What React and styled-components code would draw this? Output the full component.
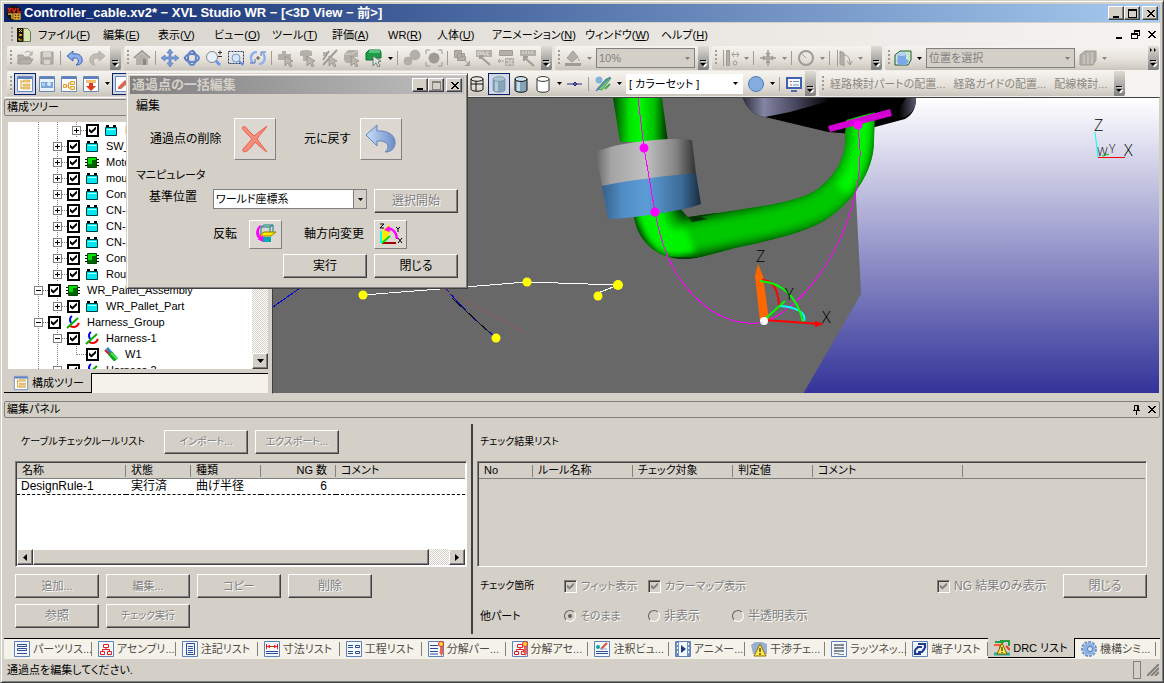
import React from 'react'
import styled, { createGlobalStyle, css } from 'styled-components'

const GlobalStyle = createGlobalStyle`
    * {
        box-sizing: border-box;
    }
    body {
        margin: 0;
        background: #d4d0c8;
        color: #000;
        font-family: "Liberation Sans", "Noto Sans CJK JP", sans-serif;
        font-size: 12px;
        line-height: 16px;
        font-feature-settings: "palt";
    }
    button, input, select {
        font: inherit;
        color: inherit;
        font-feature-settings: inherit;
        margin: 0;
        padding: 0;
    }
`

const raised = css`
    background: #d4d0c8;
    border: 1px solid;
    border-color: #fff #404040 #404040 #fff;
    box-shadow: inset -1px -1px #808080;
`

const Frame = styled.div`
    position: relative;
    min-height: 100vh;
    display: flex;
    flex-direction: column;
    padding: 3px 3px 1px 3px;
    border: 1px solid;
    border-color: #d4d0c8 #404040 #404040 #d4d0c8;
    box-shadow: inset 1px 1px #fff, inset -1px -1px #808080;
    overflow: hidden;
`

const TitleBar = styled.header`
    height: 18px;
    display: flex;
    align-items: center;
    padding: 0 2px;
    background: linear-gradient(90deg, #0a246a, #a6caf0);
    color: #fff;
    font-weight: bold;
`

const TitleText = styled.h1`
    flex: 1;
    margin: 0 0 0 2px;
    font-size: 13px;
    line-height: 18px;
    white-space: pre;
`

const WindowButton = styled.button`
    ${raised}
    width: 16px;
    height: 14px;
    display: flex;
    margin-left: ${(p) => (p.$gap ? 2 : 0)}px;
    svg {
        margin: auto;
    }
`

const MenuBar = styled.nav`
    height: 24px;
    display: flex;
    align-items: center;
    padding: 0 3px 0 4px;
    border-top: 1px solid #d4d0c8;
    background: linear-gradient(90deg, #d8d4cc, #f5f4f1);
`

const MenuItem = styled.button`
    width: ${(p) => p.$w}px;
    border: 0;
    background: none;
    text-align: left;
    white-space: nowrap;
    font-size: 11px;
`

const MenuEnd = styled.div`
    margin-left: auto;
    display: flex;
    gap: 5px;
`

const PlainButton = styled.button`
    border: 0;
    background: none;
    display: flex;
    align-items: center;
    justify-content: center;
    width: ${(p) => p.$w || 12}px;
`

const ToolRow = styled.div`
    height: ${(p) => p.$h || 25}px;
    display: flex;
    gap: 3px;
    padding: 0 0 1px 3px;
    background: linear-gradient(90deg, #d8d4cc, #f5f4f1);
`

const Bar = styled.div`
    display: flex;
    align-items: center;
    flex: 0 0 ${(p) => p.$w}px;
    background: linear-gradient(#f6f4f0, #e4e0d9 60%, #cbc6bc);
    border-radius: 2px;
    overflow: hidden;
`

const Grip = styled.span`
    flex: none;
    width: 7px;
    height: 16px;
    background: linear-gradient(#a09c94, #a09c94) 3px 0 / 2px 2px no-repeat,
        linear-gradient(#a09c94, #a09c94) 3px 4px / 2px 2px no-repeat,
        linear-gradient(#a09c94, #a09c94) 3px 8px / 2px 2px no-repeat,
        linear-gradient(#a09c94, #a09c94) 3px 12px / 2px 2px no-repeat;
`

const ToolButton = styled.button`
    flex: none;
    width: 22px;
    height: 22px;
    border: 1px solid ${(p) => (p.$on ? '#0a246a' : 'transparent')};
    background: ${(p) => (p.$on ? '#d4d8e4' : 'none')};
    display: flex;
    align-items: center;
    justify-content: center;
`

const CaretButton = styled.button`
    flex: none;
    width: 10px;
    height: 22px;
    border: 0;
    background: none;
    display: flex;
    align-items: center;
    justify-content: center;
    color: ${(p) => (p.$off ? '#8c8880' : '#000')};
`

const Divider = styled.span`
    flex: none;
    width: 1px;
    height: 14px;
    margin: 0 3px 0 2px;
    background: #a09c94;
`

const OverflowButton = styled.button`
    flex: none;
    align-self: stretch;
    width: 11px;
    margin-left: auto;
    border: 0;
    background: linear-gradient(#e0dcd4, #808080);
    display: flex;
    align-items: flex-end;
    justify-content: center;
    padding-bottom: 3px;
`

const TextTool = styled.button`
    border: 0;
    background: none;
    color: #8c8880;
    white-space: nowrap;
    padding: 0 4px;
    font-size: 11px;
`

const BarEnd = styled.div`
    margin-left: auto;
    display: flex;
    align-items: center;
    align-self: stretch;
`

const ComboBox = styled.span`
    position: relative;
    flex: none;
    width: ${(p) => p.$w}px;
    height: 20px;
    margin: ${(p) => (p.$tool ? '0 2px' : '0')};
    border: 1px solid ${(p) => (p.$flat ? '#fff' : '#808080')};
    background: ${(p) => (p.$off ? '#d4d0c8' : '#fff')};
    color: ${(p) => (p.$off ? '#808080' : '#000')};
    font-size: 11px;
    select {
        width: 100%;
        height: 100%;
        appearance: none;
        border: 0;
        background: none;
        padding-left: 2px;
        opacity: 1;
        outline: none;
    }
`

const ComboArrow = styled.span`
    position: absolute;
    top: 0;
    right: 0;
    width: 13px;
    height: 18px;
    display: flex;
    align-items: center;
    justify-content: center;
    pointer-events: none;
    border-left: ${(p) => (p.$boxed ? '1px solid #808080' : '0')};
    background: ${(p) => (p.$boxed ? '#d4d0c8' : 'none')};
`

const Main = styled.main`
    flex: 1 1 0;
    min-height: 200px;
    display: flex;
`

const SidePanel = styled.aside`
    flex: 0 0 268px;
    display: flex;
    flex-direction: column;
    padding-right: 4px;
    border-top: 1px solid #fff;
`

const Caption = styled.h2`
    margin: ${(p) => p.$m || '0'};
    height: 17px;
    padding: 0 2px;
    display: flex;
    align-items: center;
    border: 1px solid #808080;
    border-radius: 2px;
    font-size: 11px;
    font-weight: normal;
    line-height: 15px;
`

const CaptionEnd = styled.span`
    margin-left: auto;
    display: flex;
    gap: 2px;
`

const TreeArea = styled.div`
    flex: 1 1 0;
    min-height: 0;
    display: flex;
    margin: 6px 0 4px 4px;
    background: #fff;
    overflow: hidden;
`

const Tree = styled.ul`
    flex: 1;
    margin: 0;
    padding: 0 0 0 21px;
    list-style: none;
    overflow: hidden;
`

const TreeRow = styled.li`
    height: 16px;
    display: flex;
    align-items: center;
    white-space: nowrap;
    font-size: 11px;
`

const Guide = styled.span`
    flex: none;
    width: 19px;
    height: 16px;
    background: ${(p) =>
        p.$elbow
            ? 'repeating-linear-gradient(90deg, #808080 0 1px, transparent 1px 2px) 10px 8px / 9px 1px no-repeat, repeating-linear-gradient(#808080 0 1px, transparent 1px 2px) 9px 0 / 1px 9px no-repeat'
            : 'repeating-linear-gradient(#808080 0 1px, transparent 1px 2px) 9px 0 / 1px 16px no-repeat'};
`

// The dotted stem runs behind the box, above and below it
const Branch = styled.span`
    flex: none;
    display: flex;
    align-items: center;
    height: 16px;
    background:
        repeating-linear-gradient(#808080 0 1px, transparent 1px 2px) 9px 0 / 1px 16px no-repeat,
        repeating-linear-gradient(90deg, #808080 0 1px, transparent 1px 2px) 14px 8px / 5px 1px no-repeat;
`

const Expander = styled.button`
    flex: none;
    width: 9px;
    height: 9px;
    margin: 0 5px;
    border: 1px solid #808080;
    background:
        linear-gradient(#000, #000) center / 5px 1px no-repeat,
        ${(p) => (p.$open ? '' : 'linear-gradient(#000, #000) center / 1px 5px no-repeat,')}
        #fff;
`

const CheckInput = styled.input.attrs({ type: 'checkbox' })`
    appearance: none;
    flex: none;
    width: 13px;
    height: 13px;
    display: flex;
    background: ${(p) => (p.$sunken ? '#d4d0c8' : '#fff')};
    border: ${(p) => (p.$sunken ? '1px solid' : '2px solid #000')};
    ${(p) =>
        p.$sunken &&
        css`
            border-color: #808080 #fff #fff #808080;
            box-shadow: inset 1px 1px #404040;
        `}
    &:checked::before {
        content: '';
        width: 7px;
        height: 7px;
        margin: auto;
        background: ${(p) => (p.$sunken ? '#808080' : '#000')};
        clip-path: polygon(0 30%, 35% 62%, 100% 0, 100% 40%, 35% 100%, 0 70%);
    }
`

const TreeIcon = styled.svg`
    flex: none;
    width: 14px;
    height: 14px;
    margin: 0 7px 0 5px;
`

const dither = 'repeating-conic-gradient(#fff 0 25%, #d4d0c8 0 50%) 0 0 / 2px 2px'

const VScroll = styled.div`
    width: 16px;
    display: flex;
    flex-direction: column;
    justify-content: flex-end;
    background: ${dither};
`

const ScrollButton = styled.button`
    ${raised}
    flex: none;
    width: 16px;
    height: 16px;
    display: flex;
    align-items: center;
    justify-content: center;
`

const SideTabs = styled.div`
    height: 20px;
    display: flex;
    background: #f5f2ea;
    border-top: 1px solid #000;
    margin-bottom: 1px;
`

const SideTab = styled.button`
    width: 88px;
    margin: -1px 0 0;
    border: 0;
    border-right: 1px solid #000;
    border-bottom: 1px solid #000;
    background: #d4d0c8;
    display: flex;
    align-items: center;
    padding-left: 9px;
    gap: 3px;
    font-size: 11px;
    white-space: nowrap;
`

const View3D = styled.section`
    flex: 1;
    min-width: 0;
    border: 1px solid;
    border-color: #404040 #d4d0c8 #d4d0c8 #404040;
    background: linear-gradient(#fff, #333399);
    display: flex;
    overflow: hidden;
    svg {
        width: 100%;
        height: 100%;
    }
`

const EditPanel = styled.section`
    padding-top: 7px;
`

const EditBody = styled.div`
    display: flex;
    height: 220px;
`

const LeftPane = styled.div`
    flex: 0 0 467px;
    padding: 12px 4px 0 11px;
`

const RightPane = styled.div`
    flex: 1;
    min-width: 0;
    padding: 12px 13px 0 4px;
`

const Splitter = styled.div`
    width: 2px;
    margin: 6px 0 4px;
    background: #404040;
`

const Row = styled.div`
    display: flex;
    align-items: center;
    min-height: 24px;
    gap: 7px;
    margin-top: ${(p) => p.$top || 0}px;
`

const PaneLabel = styled.h3`
    width: ${(p) => p.$w}px;
    margin: 0 0 0 ${(p) => p.$left || 0}px;
    font-size: ${(p) => p.$size || 11}px;
    line-height: 16px;
    font-weight: normal;
    white-space: nowrap;
`

const PushButton = styled.button`
    ${raised}
    width: 84px;
    height: 24px;
    font-size: ${(p) => p.$size || 12}px;
    white-space: nowrap;
    &:disabled {
        color: #808080;
        text-shadow: 1px 1px #fff;
    }
`

const ListBox = styled.div`
    height: 106px;
    margin-top: 7px;
    display: flex;
    flex-direction: column;
    border: 1px solid;
    border-color: #808080 #fff #fff #808080;
    box-shadow: inset 1px 1px #404040;
    padding: 1px 1px 1px 1px;
    background: ${(p) => (p.$empty ? '#d4d0c8' : '#fff')};
`

const ListTable = styled.table`
    width: 100%;
    table-layout: fixed;
    border-collapse: collapse;
    th, td {
        height: 15px;
        padding: 0 5px;
        text-align: left;
        font-weight: normal;
        font-size: 11px;
        line-height: 14px;
        white-space: nowrap;
        overflow: hidden;
    }
    th {
        background: linear-gradient(#808080, #808080) right 2px / 1px 12px no-repeat, #d4d0c8;
        border-bottom: 1px solid #808080;
    }
    th:last-child {
        background: #d4d0c8;
    }
    td {
        height: 16px;
        border-top: 1px dashed #000;
        border-bottom: 1px dashed #000;
        font-size: 12px;
    }
    td:first-child {
        padding-left: 4px;
    }
    th.num, td.num {
        text-align: right;
        padding-right: 9px;
    }
`

const HScroll = styled.div`
    height: 16px;
    margin-top: auto;
    display: flex;
    background: ${dither};
`

const HThumb = styled.div`
    ${raised}
    flex: 1;
    margin-right: 20px;
`

const Options = styled.div`
    display: flex;
    align-items: center;
    flex: 1;
`

const OptionLabel = styled.label`
    display: flex;
    align-items: center;
    gap: 4px;
    width: ${(p) => p.$w || 84}px;
    margin-left: ${(p) => (p.$end ? 'auto' : '0')};
    color: #808080;
    text-shadow: 1px 1px #fff;
    font-size: ${(p) => p.$size || 11}px;
    white-space: nowrap;
`

const RadioInput = styled.input.attrs({ type: 'radio' })`
    appearance: none;
    width: 12px;
    height: 12px;
    display: flex;
    border: 1px solid;
    border-color: #606060 #fff #fff #606060;
    border-radius: 50%;
    &:checked::before {
        content: '';
        width: 4px;
        height: 4px;
        margin: auto;
        border-radius: 50%;
        background: #606060;
    }
`

const BottomTabs = styled.nav`
    display: flex;
    height: 21px;
    padding: 0 4px;
    background: #f5f2ea;
    border-top: 1px solid #000;
`

const BottomTab = styled.button`
    flex: ${(p) => p.$w} 1 0;
    min-width: 0;
    display: flex;
    align-items: center;
    gap: 3px;
    padding: 0 0 0 6px;
    border: 0;
    overflow: hidden;
    white-space: nowrap;
    font-size: 11px;
    color: ${(p) => (p.$on ? '#000' : '#504c48')};
    background: ${(p) =>
        p.$on ? '#d4d0c8' : 'linear-gradient(#808080, #808080) right 3px / 1px 14px no-repeat'};
    ${(p) =>
        p.$on &&
        css`
            margin: -1px 0 1px;
            border-right: 1px solid #000;
            border-bottom: 1px solid #000;
        `}
    svg {
        flex: none;
    }
`

const StatusBar = styled.footer`
    height: 22px;
    display: flex;
    align-items: center;
    padding: 0 1px 0 3px;
    font-size: 11px;
`

const StatusBox = styled.span`
    width: 8px;
    height: 18px;
    margin: 0 6px 0 auto;
    border: 1px solid #808080;
`

const Dialog = styled.section`
    position: absolute;
    top: 72px;
    left: 125px;
    width: 342px;
    padding: 2px 3px 3px 3px;
    background: #d4d0c8;
    border: 1px solid;
    border-color: #d4d0c8 #404040 #404040 #d4d0c8;
    box-shadow: inset 1px 1px #fff, inset -1px -1px #808080;
`

const DialogTitle = styled.header`
    height: 18px;
    display: flex;
    align-items: center;
    padding: 0 2px;
    background: linear-gradient(90deg, #808080, #c0c0c0);
    color: #d4d0c8;
    h2 {
        flex: 1;
        margin: 0;
        font-size: 13px;
        line-height: 18px;
    }
`

const DialogBody = styled.div`
    padding: 4px 6px 7px;
`

const DialogHeading = styled.h3`
    margin: ${(p) => p.$top || 0}px 0 0;
    font-size: ${(p) => p.$size || 12}px;
    line-height: 16px;
    font-weight: normal;
`

const DialogLine = styled.div`
    display: flex;
    align-items: ${(p) => p.$align || 'center'};
    justify-content: flex-end;
    height: ${(p) => p.$h}px;
    margin-top: ${(p) => p.$top || 0}px;
    gap: 7px;
    white-space: nowrap;
`

const LineLabel = styled.label`
    width: ${(p) => p.$w}px;
`

const ActionSlot = styled.span`
    width: ${(p) => p.$w || 84}px;
    display: flex;
`

const PictureButton = styled.button`
    width: ${(p) => p.$w}px;
    height: ${(p) => p.$h}px;
    background: #dcd8d1;
    border: 1px solid;
    border-color: #fff #808080 #808080 #fff;
    display: flex;
    align-items: center;
    justify-content: center;
`

function Caret() {
    return (
        <svg width="5" height="3" viewBox="0 0 5 3">
            <path d="M0 0h5L2.5 3z" fill="currentColor" />
        </svg>
    )
}

function Overflow({ more }) {
    return (
        <OverflowButton aria-label="ツール バー オプション">
            <svg width="7" height={more ? 20 : 7} viewBox={more ? '0 -13 7 20' : '0 0 7 7'}>
                {more && <path d="M0-12l2 2-2 2zM4-12l2 2-2 2z" fill="#000" />}
                <path d="M1 1h6M2 4h5L4.5 7z" fill="#fff" stroke="#fff" />
                <path d="M0 0h6v1H0zM0 3h6L3 6z" fill="#000" />
            </svg>
        </OverflowButton>
    )
}

const G = '#b4b0a8'
const D = '#a09c94'
const B = '#4a70b8'

// Mouse pointer that sits on the lower right of the pick tools
const pointer = <path d="M8 7l8 5-3 1 2 4-2 1-2-4-3 3z" fill="#bcb8b0" stroke="#8c8880" strokeWidth=".7" />

const icons = {
    open: (
        <g fill={G} stroke={D}>
            <path d="M2 15V6h5l1 2h6v3" />
            <path d="M2 15l3-5h12l-3 5z" />
            <path d="M9 4c2-3 5-2 6 1M16 2v4h-3" fill="none" />
        </g>
    ),
    save: (
        <g>
            <path d="M3 3h12v12H3z" fill={G} stroke={D} />
            <path d="M5 3h8v5H5zM6 11h6v4H6z" fill="#d8d4cc" />
        </g>
    ),
    undo: <path d="M1 7l6-5v3c6-1 10 2 9 8-1 2-3 3-6 3 4-3 3-8-3-7v3z" fill="#8cb0ec" stroke="#3f62b4" />,
    redo: <path d="M17 7l-6-5v3c-6-1-10 2-9 8 1 2 3 3 5 3-3-3-2-8 4-7v3z" fill="#c0bcb4" stroke="#b0aca4" />,
    home: (
        <g fill={G}>
            <path d="M3 9l6-5 6 5v7H3z" />
            <path d="M10 10h3v6h-3z" fill="#8c8880" />
            <path d="M1 9l8-7 8 7" fill="none" stroke={D} strokeWidth="2" />
        </g>
    ),
    move: (
        <path d="M9 0l3 4h-2v4h4V6l4 3-4 3v-2h-4v4h2l-3 4-3-4h2v-4H4v2L0 9l4-3v2h4V4H6z" fill="#7a9ad8" stroke={B} strokeWidth=".6" />
    ),
    rotate: (
        <g fill="none" stroke="#6484cc" strokeWidth="2">
            <ellipse cx="9" cy="9" rx="7" ry="4" />
            <ellipse cx="9" cy="9" rx="4" ry="7" />
            <path d="M1 8l2 3 3-2M9 1l3 2-2 3" strokeWidth="1" stroke={B} />
        </g>
    ),
    zoom: (
        <g>
            <path d="M10 11l5 5" stroke="#6c98f0" strokeWidth="3" />
            <circle cx="7" cy="8" r="5.5" fill="#e8f0fa" stroke="#888" />
            <path d="M13 3.5h4M15 1.500v4M13 7.500h4" stroke="#333" />
        </g>
    ),
    zoomRect: (
        <g>
            <path d="M1.5 2.5h15v12h-15z" fill="none" stroke="#203870" strokeDasharray="2 1" />
            <path d="M12 12l4 4" stroke="#5c88e0" strokeWidth="2" />
            <circle cx="9" cy="9" r="4" fill="#d4e8fa" stroke="#7898c8" />
        </g>
    ),
    refresh: (
        <g fill="none" stroke="#8cb0f0" strokeWidth="2.4">
            <path d="M8 3C2 3 0 10 4 14M10 15c6 0 7-7 4-11" />
            <path d="M1 14h5v-4M17 3h-5v4" stroke={B} strokeWidth="1" />
            <path d="M7 9h4M9 7v4" stroke="#555" strokeWidth="1" />
        </g>
    ),
    pickA: <g fill={G}><path d="M1 5h4V2h4v3h5v6H1z" />{pointer}</g>,
    pickB: <g fill={G}><ellipse cx="7" cy="3" rx="6" ry="2" /><path d="M1 3h12v4h-3v5H4V7H1z" />{pointer}</g>,
    pickC: <g fill={G}><path d="M2 3h4v4H2z" /><path d="M16 1L2 16M8 2l-6 9" stroke={D} fill="none" strokeWidth="2" />{pointer}</g>,
    pickD: <g fill={G}><path d="M5 1h10v7H8v6H3l-2-3V5z" /><path d="M1 5h8l6-4" stroke="#d8d4cc" fill="none" />{pointer}</g>,
    pickGreen: (
        <g>
            <path d="M4 1h11l1 3v5H8v2H1V4z" fill="#1e9c48" stroke="#0c6c30" />
            <path d="M4 1h11v3H4z" fill="#54c878" />
            <path d="M8 7l8 5-3 1 2 4-2 1-2-4-3 3z" fill="#d8e0dc" stroke="#586860" strokeWidth=".8" />
        </g>
    ),
    balls: (
        <g fill={G} stroke={D} strokeWidth=".5">
            <circle cx="5" cy="12" r="4" />
            <circle cx="12" cy="6" r="5" />
        </g>
    ),
    focus: (
        <g>
            <circle cx="9" cy="9" r="5.5" fill={D} />
            <path d="M1 5V1h4M13 1h4v4M17 13v4h-4M5 17H1v-4" fill="none" stroke="#999" />
        </g>
    ),
    layers: (
        <g fill={G} stroke={D}>
            <path d="M1.5 1.500h7v7h-7zM4.500 4.500h7v7h-7z" />
            <path d="M7.500 7.500h5v4M11 10l5 6M16.500 12v4.500H12" />
        </g>
    ),
    label: (
        <g>
            <path d="M1 1h16v7H1z" fill={G} />
            <path d="M3 3h3v3H3zM8 2v4h2V4M14 3h-2v3h2" fill="none" stroke="#e4e0d9" />
            <path d="M5 10V7h4M6 8l9 8" fill="none" stroke={D} strokeWidth="2" />
        </g>
    ),
    labelC: (
        <g>
            <path d="M2.500 1.500h13v5h-13z" fill={G} stroke={D} />
            <path d="M1 12h6M3 10l-2 2 2 2" fill="none" stroke={D} />
            <path d="M8 9h9v8H8z" fill={G} />
            <path d="M9 11h3v4H9M16 11h-2v4h2" fill="none" stroke="#e4e0d9" />
        </g>
    ),
    ruler: (
        <g>
            <path d="M1 1h16v6H1z" fill={G} />
            <path d="M4 2v3M7 2v3M10 2v3M13 2v3" stroke="#e4e0d9" />
            <path d="M5 12V8h4M6 9l9 8" fill="none" stroke={D} strokeWidth="2" />
        </g>
    ),
    paint: (
        <g fill={G}>
            <path d="M3 9l6-7 5 6-6 5z" stroke={D} />
            <path d="M14 8l2 4h-2z" />
            <path d="M1 14h16v3H1z" fill={D} />
        </g>
    ),
    align: (
        <g fill="none" stroke={D}>
            <path d="M2.500 1v16" />
            <path d="M5.500 1.500h3v15h-3z" fill={G} />
            <path d="M11 5.500h7M13 3l-2 2.500L13 8M16 3l2 2.500L16 8" />
            <circle cx="14" cy="14" r="2" />
        </g>
    ),
    cluster: (
        <g fill={G} stroke={D}>
            <path d="M7 7h4v4H7z" />
            <path d="M9 1v5M7 4l2 2 2-2M9 17v-5M7 14l2-2 2 2M1 9h5M4 7l2 2-2 2M17 9h-5M14 7l-2 2 2 2" fill="none" strokeWidth="1.500" />
        </g>
    ),
    clock: (
        <g fill="none" stroke={D} strokeWidth="2">
            <circle cx="9" cy="9" r="7" />
            <path d="M5 5l4 4" strokeWidth="1" />
        </g>
    ),
    slope: (
        <g fill="none" stroke={D}>
            <path d="M2.500 1v16M5 2l4 2v13l-4-2z" fill={G} />
            <path d="M9 6c4 0 6 3 6 9M12 12l3 4 2-4" />
        </g>
    ),
    place: (
        <g>
            <path d="M1 6l5-4h11v9l-3 5H1z" fill="#cfe4d0" stroke="#186020" />
            <path d="M4 5h8v5l3 2-3 4H5l-2-3z" fill="#7ca8e8" />
            <ellipse cx="8" cy="5" rx="4" ry="2" fill="#b4d0f4" />
        </g>
    ),
    placeOff: (
        <g>
            <path d="M1 6l5-4h11v9l-3 5H1z" fill={G} stroke={D} />
            <path d="M5 6v9M9 4v11M13 3v12" stroke="#d8d4cc" />
        </g>
    ),
    cylWire: <path d="M3 4c0-3 12-3 12 0v10c0 3-12 3-12 0zM3 4c0 3 12 3 12 0M3 9h12M8 6v10" fill="none" stroke="#111" />,
    cylBlue: (
        <g stroke="#6c8498" strokeWidth=".6">
            <path d="M3 4v11c0 3 12 3 12 0V4z" fill="#84a4b8" />
            <path d="M5 6h3v10H5z" fill="#b4ccd8" stroke="none" />
            <ellipse cx="9" cy="4" rx="6" ry="2.4" fill="#a8c4d4" />
        </g>
    ),
    cylEdge: (
        <g stroke="#111">
            <path d="M3 4v11c0 3 12 3 12 0V4z" fill="#84a4b8" />
            <path d="M5 7h3v9H5z" fill="#c4dce8" stroke="none" />
            <ellipse cx="9" cy="4" rx="6" ry="2.4" fill="#d4e4ec" />
        </g>
    ),
    cylWhite: (
        <g stroke="#333">
            <path d="M3 4v11c0 3 12 3 12 0V4z" fill="#fff" />
            <ellipse cx="9" cy="4" rx="6" ry="2.4" fill="#fff" />
        </g>
    ),
    axisPoint: <path d="M1 9h15M9 7l2 2-2 2-2-2z" fill="#8888d0" stroke="#26267c" />,
    percent: (
        <g>
            <path d="M3 14L12 4l5-1L8 15z" fill="#7cc878" stroke="#48a050" />
            <circle cx="5" cy="5" r="3.5" fill="#88b4dc" />
            <path d="M2 16L16 2" stroke="#507cc0" strokeWidth="1.500" />
            <path d="M11 14l5-5" stroke="#48a050" strokeWidth="2" />
        </g>
    ),
    sphere: <circle cx="9" cy="9" r="7.5" fill="#84acdc" stroke="#4e7cb8" />,
    monitor: (
        <g>
            <path d="M2 3h14v10H2z" fill="#f4f8ff" stroke="#4060b0" strokeWidth="2" />
            <path d="M5 6.500h2M5 10h2" stroke="#e06040" />
            <path d="M8 6.500h6M8 10h6" stroke="#7090c0" />
            <path d="M6 15h6v2H6z" fill="#5070b0" />
        </g>
    ),
    paneTree: (
        <g>
            <path d="M1.5 1.5h15v15h-15z" fill="#fff" stroke="#6c88b8" />
            <path d="M2 2h14v2H2z" fill="#5c80c0" />
            <path d="M5 5v9M5 7h2M5 13h2" stroke="#e0a030" fill="none" />
            <path d="M7 5h7v2H7zM7 9h7v2H7zM7 12h7v2H7z" fill="#f0d080" stroke="#c89030" strokeWidth=".5" />
        </g>
    ),
    paneView: (
        <g>
            <path d="M1.5 1.5h15v15h-15z" fill="#e8f0fa" stroke="#6c88b8" />
            <path d="M2 2h14v2H2z" fill="#5c80c0" />
            <path d="M3 7h12v6H3z" fill="#7ca4d4" />
            <circle cx="11" cy="9" r="2" fill="#dcecfc" />
            <path d="M4 8h3v3H4z" fill="#b4d0f0" />
        </g>
    ),
    paneFlow: (
        <g>
            <path d="M1.5 1.5h15v15h-15z" fill="#fff" stroke="#6c88b8" />
            <path d="M2 2h14v2H2z" fill="#5c80c0" />
            <path d="M3.500 9.500h3v3h-3zM10.500 6.500h4v3h-4zM10.500 11.500h4v3h-4zM7 11h1.500V8h2M8.500 11v2h2" fill="#fce8b8" stroke="#e0a030" />
        </g>
    ),
    paneDown: (
        <g>
            <path d="M1.5 1.5h15v15h-15z" fill="#fff" stroke="#6c88b8" />
            <path d="M2 2h14v2H2z" fill="#5c80c0" />
            <path d="M4 5h10v3H4z" fill="#f0c070" />
            <path d="M7 8h4v3h3l-5 5-5-5h3z" fill="#e03820" />
        </g>
    ),
    paneEdit: (
        <g>
            <path d="M1.5 1.5h15v15h-15z" fill="#fff" stroke="#6c88b8" />
            <path d="M4 12l7-7 3 3-7 6H4z" fill="#d86850" />
        </g>
    ),
}

function Icon({ name, size = 18 }) {
    return (
        <svg width={size} height={size} viewBox="0 0 18 18">
            {icons[name]}
        </svg>
    )
}

// A tool strip item is an icon name, 'v' for a live caret, 'V' for a greyed one, '|' for a divider
function Tools({ items, active = [] }) {
    return items.map((item, i) => {
        if (item === '|') return <Divider key={i} />
        if (item === 'v' || item === 'V') {
            return (
                <CaretButton key={i} $off={item === 'V'} aria-label="メニュー">
                    <Caret />
                </CaretButton>
            )
        }
        return (
            <ToolButton key={i} $on={active.includes(item)} aria-label={item}>
                <Icon name={item} />
            </ToolButton>
        )
    })
}

function Combo({ value, width, off, tool, flat, boxed, label, id }) {
    return (
        <ComboBox $w={width} $off={off} $tool={tool} $flat={flat}>
            <select id={id} aria-label={label} disabled={off}>
                <option>{value}</option>
            </select>
            <ComboArrow $boxed={boxed}>
                <Caret />
            </ComboArrow>
        </ComboBox>
    )
}

const glyphs = {
    min: <path d="M1 7h6v2H1z" />,
    max: <path d="M0 0h9v9H0zM1 2v6h7V2z" fillRule="evenodd" />,
    close: <path d="M0 1h2l2.5 2.5L7 1h2L5.5 4.5 9 8H7L4.5 5.5 2 8H0l3.5-3.5z" />,
    restore: <path d="M3 0h6v6H7v3H0V3h3zM4 2v1h3v2h1V2zM1 5v3h5V5z" fillRule="evenodd" />,
}

function Glyph({ name, color = '#000' }) {
    return (
        <svg width="9" height="9" viewBox="0 0 9 9" fill={color} shapeRendering="crispEdges">
            {glyphs[name]}
        </svg>
    )
}

function WindowButtons({ maxColor }) {
    return (
        <>
            <WindowButton aria-label="最小化"><Glyph name="min" /></WindowButton>
            <WindowButton aria-label="最大化"><Glyph name="max" color={maxColor} /></WindowButton>
            <WindowButton $gap aria-label="閉じる"><Glyph name="close" /></WindowButton>
        </>
    )
}

const menus = [
    ['ファイル', 'F', 65],
    ['編集', 'E', 55],
    ['表示', 'V', 56],
    ['ビュー', 'O', 58],
    ['ツール', 'T', 60],
    ['評価', 'A', 56],
    ['WR', 'R', 49],
    ['人体', 'U', 55],
    ['アニメーション', 'N', 93],
    ['ウィンドウ', 'W', 76],
    ['ヘルプ', 'H', 60],
]

const treeIcons = {
    part: (
        <g>
            <path d="M1.5 4.5h11v8h-11z" fill="#00e8f0" stroke="#003c40" />
            <path d="M2 2h3v2H2zM9 2h3v2H9z" fill="#000" />
            <path d="M3 6h8v1H3z" fill="#b0ffff" />
        </g>
    ),
    assembly: (
        <g>
            <path d="M0 4.5h14M0 7.5h14M0 10.5h14" stroke="#000" />
            <path d="M2.5 2.5h9v10h-9z" fill="#00e000" stroke="#004800" />
            <path d="M3 12V9h4V5h4v7z" fill="#006400" />
        </g>
    ),
    harness: (
        <g fill="none" strokeWidth="2">
            <path d="M6 1C3 3 4 6 5 8" stroke="#0000f0" />
            <path d="M4 11c4 2 7 1 9-3" stroke="#f00000" />
            <path d="M1 13L12 3" stroke="#00b000" />
        </g>
    ),
    wire: (
        <g strokeWidth="3">
            <path d="M3 1l4 5" stroke="#3080d0" />
            <path d="M1 3l5 5" stroke="#d02020" strokeWidth="2" />
            <path d="M6 6l6 7" stroke="#10a020" strokeWidth="5" />
            <path d="M7 6l6 6" stroke="#40e850" strokeWidth="2" />
        </g>
    ),
}

const treeRows = [
    { depth: 2, icon: 'part', text: 'Lever' },
    { depth: 1, icon: 'part', text: 'SW_Box' },
    { depth: 1, icon: 'assembly', text: 'Motor' },
    { depth: 1, icon: 'part', text: 'mount' },
    { depth: 1, icon: 'part', text: 'Connector' },
    { depth: 1, icon: 'part', text: 'CN-1' },
    { depth: 1, icon: 'part', text: 'CN-2' },
    { depth: 1, icon: 'part', text: 'CN-3' },
    { depth: 1, icon: 'assembly', text: 'Controller' },
    { depth: 1, icon: 'part', text: 'Route' },
    { depth: 0, icon: 'assembly', text: 'WR_Pallet_Assembly', open: true },
    { depth: 1, icon: 'part', text: 'WR_Pallet_Part' },
    { depth: 0, icon: 'harness', text: 'Harness_Group', open: true },
    { depth: 1, icon: 'harness', text: 'Harness-1', open: true },
    { depth: 2, icon: 'wire', text: 'W1', leaf: true },
    { depth: 1, icon: 'harness', text: 'Harness-2', open: true },
]

function StructureTree() {
    return (
        <Tree>
            {treeRows.map((row, i) => (
                <TreeRow key={i}>
                    {Array.from({ length: row.depth }, (_, d) => (
                        <Guide key={d} />
                    ))}
                    {row.leaf ? (
                        <Guide $elbow />
                    ) : (
                        <Branch>
                            <Expander $open={row.open} aria-label="展開" />
                        </Branch>
                    )}
                    <CheckInput defaultChecked aria-label={row.text} />
                    <TreeIcon viewBox="0 0 14 14">{treeIcons[row.icon]}</TreeIcon>
                    {row.text}
                </TreeRow>
            ))}
        </Tree>
    )
}

const pipe =
    'M633 212C636 246 664 262 690 259C707 257 725 250 745 246C785 237 810 231 830 217C852 201 874 172 874 142L875 112L846 120L845 134C848 158 832 181 813 192C790 204 750 208 688 217L678 206L655 200z'
const pipeAxis = 'M654 195C658 236 676 240 700 236C750 225 790 220 820 205C848 188 861 160 860 112'

function Scene() {
    return (
        <svg viewBox="273 98 886 295" preserveAspectRatio="xMidYMid slice" role="img" aria-label="3D View">
            <defs>
                <linearGradient id="topPipe">
                    <stop offset="0" stopColor="#004c00" />
                    <stop offset=".3" stopColor="#00e400" />
                    <stop offset=".5" stopColor="#00f800" />
                    <stop offset=".75" stopColor="#00c000" />
                    <stop offset="1" stopColor="#002c00" />
                </linearGradient>
                <linearGradient id="collar">
                    <stop offset="0" stopColor="#686868" />
                    <stop offset=".15" stopColor="#a4a4a4" />
                    <stop offset=".5" stopColor="#c0c0c0" />
                    <stop offset=".8" stopColor="#848484" />
                    <stop offset="1" stopColor="#303030" />
                </linearGradient>
                <linearGradient id="band">
                    <stop offset="0" stopColor="#34608a" />
                    <stop offset=".2" stopColor="#508cc4" />
                    <stop offset=".45" stopColor="#5c9cd6" />
                    <stop offset=".8" stopColor="#3c6c98" />
                    <stop offset="1" stopColor="#182c40" />
                </linearGradient>
                <linearGradient id="cover">
                    <stop offset="0" stopColor="#303040" />
                    <stop offset=".12" stopColor="#8484a4" />
                    <stop offset=".3" stopColor="#484860" />
                    <stop offset=".5" stopColor="#000" />
                    <stop offset=".9" stopColor="#000" />
                    <stop offset="1" stopColor="#5c5c74" />
                </linearGradient>
                <clipPath id="pipeClip">
                    <path d={pipe} />
                </clipPath>
                <filter id="soft" x="-10%" y="-10%" width="120%" height="120%">
                    <feGaussianBlur stdDeviation="3" />
                </filter>
            </defs>
            <path d="M272 98H851L861 294L803 394H272z" fill="#686868" />
            <path d="M743 98C746 106 752 115 765 117L828 132L853 134L875 127L905 119C914 114 916 106 916 98z" fill="#000" />
            <path d="M743 98C746 106 752 115 765 117L790 112L840 98zM893 119L905 117C914 112 916 106 916 98H906z" fill="url(#cover)" />
            <g clipPath="url(#pipeClip)">
                <path d={pipe} fill="#004400" />
                <g filter="url(#soft)" fill="none">
                    <path d={pipeAxis} stroke="#009c00" strokeWidth="36" />
                    <path d={pipeAxis} stroke="#00c800" strokeWidth="22" />
                    <path d="M648 208C656 238 668 250 690 240" stroke="#00f400" strokeWidth="26" />
                    <path d="M863 112C863 160 854 175 842 190" stroke="#00f400" strokeWidth="16" />
                </g>
            </g>
            <path d="M688 217l30-4-18 4 8 2-16 3z" fill="#003400" />
            <path d="M613 98H662L668 142H620z" fill="url(#topPipe)" />
            <path d="M596 153C606 144 668 136 692 140L696 174L602 186z" fill="url(#collar)" />
            <path d="M602 186C630 180 664 176 696 173L701 204C690 209 640 218 608 219z" fill="url(#band)" />
            <path d="M828 126L890 109L892 116L830 132z" fill="#d400d4" />
            <path
                d="M638 98L644 148L655 212C662 250 675 285 712 311C730 322 750 326 768 321C820 296 862 215 860 150L858 125"
                fill="none"
                stroke="#f0f"
                shapeRendering="crispEdges"
            />
            <g fill="#f0f">
                <circle cx="644" cy="148" r="4.5" />
                <circle cx="655" cy="212" r="4.5" />
                <circle cx="858" cy="125" r="4.5" />
            </g>
            <g fill="none" shapeRendering="crispEdges">
                <path d="M273 307L300 288M445 288L470 315L496 338" stroke="#0000e0" />
                <path d="M452 298L490 333" stroke="#101018" />
                <path d="M440 288L527 334" stroke="#845c5c" />
                <path d="M363 295L440 289L527 282L618 285L598 293" stroke="#fff" />
            </g>
            <g fill="#ff0">
                <circle cx="363" cy="295" r="4.5" />
                <circle cx="527" cy="282" r="4.5" />
                <circle cx="618" cy="285" r="5" />
                <circle cx="598" cy="296" r="4.5" />
                <circle cx="496" cy="338" r="4.5" />
            </g>
            <path d="M760 321L755 276L758 264L763 276L769 320z" fill="#ff6600" />
            <g fill="none" strokeWidth="2">
                <path d="M762 280C773 280 778 290 779 305" stroke="#f00" />
                <path d="M780 306C795 307 807 312 804 321" stroke="#0ff" />
                <path d="M760 281C780 282 797 295 803 322" stroke="#0f0" />
                <path d="M764 320L785 301" stroke="#0f0" />
                <path d="M765 320L820 324" stroke="#f00" />
            </g>
            <path d="M815 321L824 324L815 327z" fill="#f00" />
            <circle cx="764" cy="321" r="4" fill="#fff" />
            <g fontSize="16" fontFamily="Open Sans, sans-serif" fontWeight="300" fill="#000">
                <text x="756" y="262">Z</text>
                <text x="785" y="300">Y</text>
                <text x="822" y="323">X</text>
                <text x="1094" y="131">Z</text>
                <text x="1124" y="156">X</text>
            </g>
            <g fontSize="12" fontFamily="Open Sans, sans-serif" fontWeight="300" fill="#000">
                <text x="1097" y="156">W</text>
                <text x="1109" y="153">Y</text>
            </g>
            <path d="M1095 132L1098 157" stroke="#0ff" />
            <path d="M1098 157.5H1125" stroke="#f00" />
            <path d="M1102 156L1109 154" stroke="#0c0" />
        </svg>
    )
}

const box = <path d="M.5.5h15v15H.5z" fill="#f4f8ff" stroke="#6080b8" />
const redTree = <path d="M5.5 3.5h5v3h-5zM2.5 10.5h4v3h-4zM9.5 10.5h4v3h-4zM8 7v2M4.5 10V8.5h7V10" fill="none" stroke="#e02020" />
const redPin = (
    <g>
        <path d="M12 4h3v7h1l-2.5 4-2.5-4h1z" fill="#f06050" />
        <circle cx="13" cy="3" r="2.5" fill="#ffd840" stroke="#f03020" />
    </g>
)

const tabIcons = {
    parts: <>{box}<path d="M3.5 3.5h9v2h-9zM3.5 7.5h9v2h-9zM3 12.5h10" fill="none" stroke="#304c90" /></>,
    asm: <>{box}{redTree}</>,
    note: <>{box}<path d="M4.5 2.5h8v11h-8zM6 5.5h5M6 7.5h5M6 9.5h5M6 11.5h5" fill="none" stroke="#304c90" /></>,
    dim: <>{box}<path d="M2.5 3v5M13.5 3v5M3 5.5h10M6 4L4 5.5 6 7M10 4l2 1.5L10 7" fill="none" stroke="#e02020" /><path d="M2 10.5h12M2 12.5h12" stroke="#304c90" /></>,
    process: <>{box}<path d="M2 4.5h5M2 6.5h5M2 10.5h5M2 12.5h5M9.5 4.5h4v2h-4zM9.5 10.5h4v2h-4z" fill="none" stroke="#304c90" /></>,
    expPart: <>{box}<path d="M2 4.5h8M2 7.5h8M2 10.5h8M2 13h8" stroke="#304c90" />{redPin}</>,
    expAsm: <>{box}{redTree}{redPin}</>,
    view: <>{box}<path d="M2 10.5h12M2 12.5h12" stroke="#304c90" /><path d="M7 8l6-6" stroke="#e05030" strokeWidth="2" /><path d="M6 8h7" stroke="#90a8c8" /><circle cx="4" cy="6" r="2" fill="#00a8a8" /></>,
    anim: <>{box}<path d="M1 1h3v14H1zM12 1h3v14h-3z" fill="#7090c0" /><path d="M2.5 2v12M13.5 2v12" stroke="#fff" strokeDasharray="2 2" /><path d="M6 4l5 4-5 4z" fill="#203878" /></>,
    warn: <><path d="M0 4l4-3h7l5 2v10H2z" fill="#98b0d0" /><path d="M9 3l6 12H3z" fill="#ffe850" stroke="#907000" /><path d="M9 7v4M9 12v2" stroke="#000" /></>,
    rats: <>{box}<path d="M3 4c3-2 7 2 10 0M3 7c3-2 7 2 10 0M3 10c3-2 7 2 10 0M3 13c3-2 7 2 10 0M3 4c3 2 7-2 10 0M3 7c3 2 7-2 10 0M3 10c3 2 7-2 10 0" fill="none" stroke="#606870" /></>,
    terminal: <>{box}<path d="M3 9l3-3h4M13 7l-3 4H6M6 3h7v4M3 9v4h6" fill="none" stroke="#203c90" strokeWidth="2.2" /></>,
    drc: <><path d="M1 2h9M6 1h9v5" fill="none" stroke="#20a040" strokeWidth="2" /><path d="M0 5h6v4" fill="none" stroke="#f06030" strokeWidth="2" /><path d="M0 14h16" stroke="#20b0a0" strokeWidth="3" /><path d="M12 6l4 4" stroke="#e04020" strokeWidth="2" /><path d="M8 3l5 11H3z" fill="#ffe850" stroke="#806000" /><path d="M8 7v4M8 12v1" stroke="#000" /></>,
    gear: <><circle cx="8" cy="8" r="7" fill="none" stroke="#6c94cc" strokeDasharray="3 1" strokeWidth="2" /><circle cx="8" cy="8" r="6" fill="#8cb0e0" /><circle cx="9" cy="8" r="2.5" fill="#dce8f8" stroke="#5078b0" /></>,
}

const tabs = [
    ['parts', 'パーツリス...', 84],
    ['asm', 'アセンブリ...', 84],
    ['note', '注記リスト', 82],
    ['dim', '寸法リスト', 82],
    ['process', '工程リスト', 82],
    ['expPart', '分解パー...', 84],
    ['expAsm', '分解アセ...', 83],
    ['view', '注釈ビュ...', 80],
    ['anim', 'アニメー...', 76],
    ['warn', '干渉チェ...', 80],
    ['rats', 'ラッツネッ...', 81],
    ['terminal', '端子リスト', 82],
    ['drc', 'DRC リスト', 86],
    ['gear', '機構シミ...', 81],
]

function PassPointDialog() {
    return (
        <Dialog role="dialog" aria-label="通過点の一括編集">
            <DialogTitle>
                <h2>通過点の一括編集</h2>
                <WindowButtons maxColor="#808080" />
            </DialogTitle>
            <DialogBody>
                <DialogHeading>編集</DialogHeading>
                <DialogLine $h={42} $top={4}>
                    <LineLabel $w={77} htmlFor="deletePoint">通過点の削除</LineLabel>
                    <ActionSlot $w={63}>
                        <PictureButton id="deletePoint" $w={42} $h={42}>
                            <svg width="28" height="28" viewBox="0 0 28 28">
                                <path d="M1 3c2-3 4-1 6 2l6 6L26 1c-2 4-7 8-10 13l10 13c-5-3-9-7-12-10-2 3-5 7-8 9-3 2-6 0-3-3l8-9C8 11 4 7 1 3z" fill="#f88c7c" stroke="#e86050" />
                            </svg>
                        </PictureButton>
                    </ActionSlot>
                    <LineLabel $w={49} htmlFor="undoPoint">元に戻す</LineLabel>
                    <ActionSlot $w={98}>
                        <PictureButton id="undoPoint" $w={42} $h={42}>
                            <svg width="32" height="30" viewBox="0 0 32 30">
                                <defs>
                                    <linearGradient id="undoFill">
                                        <stop offset="0" stopColor="#c8e0f8" />
                                        <stop offset="1" stopColor="#6c8cc8" />
                                    </linearGradient>
                                </defs>
                                <path d="M1 11L12 1v6c13-1 19 6 18 13-1 5-4 8-10 8 5-4 4-12-8-11v5z" fill="url(#undoFill)" stroke="#6484b8" />
                            </svg>
                        </PictureButton>
                    </ActionSlot>
                </DialogLine>
                <DialogHeading $top={7} $size={11}>マニピュレータ</DialogHeading>
                <DialogLine $h={24} $top={6} $align="flex-start">
                    <LineLabel $w={57} htmlFor="basePosition">基準位置</LineLabel>
                    <Combo id="basePosition" value="ワールド座標系" width={154} boxed />
                    <PushButton disabled>選択開始</PushButton>
                </DialogLine>
                <DialogLine $h={30} $top={6}>
                    <LineLabel $w={29} htmlFor="flip">反転</LineLabel>
                    <ActionSlot $w={48}>
                        <PictureButton id="flip" $w={33} $h={29}>
                            <svg width="22" height="20" viewBox="0 0 22 20">
                                <path d="M6 3l3-2h9v8l-3 2H6zM6 3h9v8M15 3l3-2" fill="none" stroke="#008080" />
                                <path d="M4 12l5-4h12l-5 4z" fill="#ffe800" stroke="#908000" />
                                <path d="M8 13h8v5H8z" fill="#00a8b0" />
                                <path d="M5 1C0 5 0 12 4 15H2l6 3V11l-2 2C3 9 4 5 6 2z" fill="#f0f" />
                            </svg>
                        </PictureButton>
                    </ActionSlot>
                    <LineLabel $w={63} htmlFor="axisDir">軸方向変更</LineLabel>
                    <ActionSlot>
                        <PictureButton id="axisDir" $w={33} $h={29}>
                            <svg width="24" height="22" viewBox="0 0 24 22">
                                <path d="M2 21V9l9-8v8L5 20z" fill="#ffe800" />
                                <path d="M2 8v12" stroke="#0ff" strokeWidth="2" />
                                <path d="M3 20h14" stroke="#a00000" strokeWidth="2" />
                                <path d="M3 20l8-7" stroke="#0d0" strokeWidth="2" />
                                <path d="M9 5c5 1 9 5 9 11" fill="none" stroke="#f0f" strokeWidth="2.5" />
                                <path d="M5 7l5-4 1 6z" fill="#f0f" />
                                <path d="M1 1h4L1 5h4M17 4l2 2 2-2M19 6v3M19 15l4 5M23 15l-4 5" fill="none" stroke="#000" />
                            </svg>
                        </PictureButton>
                    </ActionSlot>
                </DialogLine>
                <DialogLine $h={24} $top={5}>
                    <PushButton>実行</PushButton>
                    <PushButton>閉じる</PushButton>
                </DialogLine>
            </DialogBody>
        </Dialog>
    )
}

function RuleList() {
    return (
        <LeftPane>
            <Row>
                <PaneLabel $w={136} $left={6} $size={10}>ケーブルチェックルールリスト</PaneLabel>
                <PushButton disabled $size={10}>インポート...</PushButton>
                <PushButton disabled $size={10}>エクスポート...</PushButton>
            </Row>
            <ListBox>
                <ListTable>
                    <colgroup>
                        <col width="109" />
                        <col width="65" />
                        <col width="70" />
                        <col width="75" />
                        <col />
                    </colgroup>
                    <thead>
                        <tr>
                            <th>名称</th>
                            <th>状態</th>
                            <th>種類</th>
                            <th className="num">NG 数</th>
                            <th>コメント</th>
                        </tr>
                    </thead>
                    <tbody>
                        <tr>
                            <td>DesignRule-1</td>
                            <td>実行済</td>
                            <td>曲げ半径</td>
                            <td className="num">6</td>
                            <td />
                        </tr>
                    </tbody>
                </ListTable>
                <HScroll>
                    <ScrollButton aria-label="左へ">
                        <svg width="4" height="7" viewBox="0 0 4 7"><path d="M4 0v7L0 3.5z" /></svg>
                    </ScrollButton>
                    <HThumb />
                    <ScrollButton aria-label="右へ">
                        <svg width="4" height="7" viewBox="0 0 4 7"><path d="M0 0v7l4-3.5z" /></svg>
                    </ScrollButton>
                </HScroll>
            </ListBox>
            <Row $top={7}>
                <PushButton disabled $size={11}>追加...</PushButton>
                <PushButton disabled $size={11}>編集...</PushButton>
                <PushButton disabled $size={11}>コピー</PushButton>
                <PushButton disabled>削除</PushButton>
            </Row>
            <Row $top={6}>
                <PushButton disabled>参照</PushButton>
                <PushButton disabled $size={10}>チェック実行</PushButton>
            </Row>
        </LeftPane>
    )
}

function ResultList() {
    return (
        <RightPane>
            <Row>
                <PaneLabel $left={3} $size={10}>チェック結果リスト</PaneLabel>
            </Row>
            <ListBox $empty>
                <ListTable>
                    <colgroup>
                        <col width="54" />
                        <col width="100" />
                        <col width="100" />
                        <col width="80" />
                        <col width="150" />
                        <col />
                    </colgroup>
                    <thead>
                        <tr>
                            <th>No</th>
                            <th>ルール名称</th>
                            <th>チェック対象</th>
                            <th>判定値</th>
                            <th>コメント</th>
                            <th />
                        </tr>
                    </thead>
                </ListTable>
            </ListBox>
            <Row $top={7}>
                <PaneLabel $w={77} $left={3} $size={10}>チェック箇所</PaneLabel>
                <Options>
                    <OptionLabel>
                        <CheckInput $sunken defaultChecked disabled />
                        フィット表示
                    </OptionLabel>
                    <OptionLabel $w={120}>
                        <CheckInput $sunken defaultChecked disabled />
                        カラーマップ表示
                    </OptionLabel>
                    <OptionLabel $end $w={119} $size={12}>
                        <CheckInput $sunken defaultChecked disabled />
                        NG 結果のみ表示
                    </OptionLabel>
                </Options>
                <PushButton disabled>閉じる</PushButton>
            </Row>
            <Row $top={6}>
                <PaneLabel $w={77} $left={3}>他パート</PaneLabel>
                <Options>
                    <OptionLabel>
                        <RadioInput name="others" defaultChecked disabled />
                        そのまま
                    </OptionLabel>
                    <OptionLabel $size={12}>
                        <RadioInput name="others" disabled />
                        非表示
                    </OptionLabel>
                    <OptionLabel $size={12}>
                        <RadioInput name="others" disabled />
                        半透明表示
                    </OptionLabel>
                </Options>
            </Row>
        </RightPane>
    )
}

function App() {
    return (
        <>
            <GlobalStyle />
            <Frame>
                <TitleBar>
                    <svg width="16" height="16" viewBox="0 0 16 16">
                        <circle cx="8" cy="8" r="7.5" fill="#181410" />
                        <path d="M2 3l3 4M5 3L2 7M6 3l2 4 2-4M12 3v4h3" fill="none" stroke="#f02010" strokeWidth="1.5" />
                        <path d="M2 9h4v5M8 9h6v5H8zM8 11.5h6M11 9v6" fill="none" stroke="#e0a830" strokeWidth="1.5" />
                    </svg>
                    <TitleText>Controller_cable.xv2* − XVL Studio WR − [&lt;3D View − 前&gt;]</TitleText>
                    <WindowButtons />
                </TitleBar>
                <MenuBar>
                    <Grip />
                    <svg width="23" height="18" viewBox="0 0 23 18">
                        <path d="M2 2h7v14H2z" fill="#181410" />
                        <path d="M4 3l3 3M7 3L4 6M4 8l3 1-3 1M4 12v2h3" fill="none" stroke="#f0c020" />
                        <path d="M8.5 2.5h4l3 3v10h-7z" fill="#d8e8b0" stroke="#707850" />
                    </svg>
                    {menus.map(([text, key, w]) => (
                        <MenuItem key={key} $w={w}>
                            {text}(<u>{key}</u>)
                        </MenuItem>
                    ))}
                    <MenuEnd>
                        <PlainButton $w={11} aria-label="最小化"><Glyph name="min" /></PlainButton>
                        <PlainButton $w={11} aria-label="元のサイズに戻す"><Glyph name="restore" /></PlainButton>
                        <PlainButton $w={11} aria-label="閉じる"><Glyph name="close" /></PlainButton>
                    </MenuEnd>
                </MenuBar>
                <ToolRow>
                    <Bar $w={114}>
                        <Grip />
                        <Tools items={['open', 'save', '|', 'undo', 'redo']} />
                        <Overflow />
                    </Bar>
                    <Bar $w={428}>
                        <Grip />
                        <Tools
                            items={[
                                'home', '|', 'move', 'rotate', 'zoom', 'zoomRect', 'refresh', '|',
                                'pickA', 'pickB', 'pickC', 'pickD', 'pickGreen', 'v', '|',
                                'balls', 'focus', '|', 'layers', 'label', 'labelC', 'ruler',
                            ]}
                        />
                        <Overflow />
                    </Bar>
                    <Bar $w={154}>
                        <Grip />
                        <Tools items={['paint', 'V']} />
                        <Combo value="10%" width={99} off tool label="透明度" />
                        <Overflow />
                    </Bar>
                    <Bar $w={170}>
                        <Grip />
                        <Tools items={['align', 'V', '|', 'cluster', 'V', '|', 'clock', 'V', '|', 'slope', 'V']} />
                        <Overflow />
                    </Bar>
                    <Bar $w={274}>
                        <Grip />
                        <Tools items={['place', 'v']} />
                        <Combo value="位置を選択" width={149} off tool label="位置" />
                        <Tools items={['placeOff', 'V']} />
                        <Overflow more />
                    </Bar>
                </ToolRow>
                <ToolRow $h={26}>
                    <Bar $w={809}>
                        <Grip />
                        <Tools
                            items={['paneTree', 'paneView', 'paneFlow', 'paneDown', 'v', 'paneEdit']}
                            active={['paneTree', 'paneEdit']}
                        />
                        <BarEnd>
                            <Tools
                                items={['cylWire', 'cylBlue', 'cylEdge', 'cylWhite', 'v', 'axisPoint', '|', 'percent', 'v']}
                                active={['cylBlue']}
                            />
                            <Combo value="[ カラーセット ]" width={117} tool flat label="カラーセット" />
                            <Tools items={['sphere', 'v', '|', 'monitor']} />
                            <Overflow />
                        </BarEnd>
                    </Bar>
                    <Bar $w={306}>
                        <Grip />
                        <TextTool>経路検討パートの配置...</TextTool>
                        <TextTool>経路ガイドの配置...</TextTool>
                        <TextTool>配線検討...</TextTool>
                        <Overflow />
                    </Bar>
                </ToolRow>
                <Main>
                    <SidePanel>
                        <Caption $m="1px 0 0">構成ツリー</Caption>
                        <TreeArea>
                            <StructureTree />
                            <VScroll>
                                <ScrollButton aria-label="下へ">
                                    <svg width="7" height="4" viewBox="0 0 7 4"><path d="M0 0h7L3.5 4z" /></svg>
                                </ScrollButton>
                            </VScroll>
                        </TreeArea>
                        <SideTabs>
                            <SideTab>
                                <Icon name="paneTree" size={16} />
                                構成ツリー
                            </SideTab>
                        </SideTabs>
                    </SidePanel>
                    <View3D>
                        <Scene />
                    </View3D>
                </Main>
                <EditPanel>
                    <Caption>
                        編集パネル
                        <CaptionEnd>
                            <PlainButton $w={14} aria-label="ピン留め">
                                <svg width="7" height="10" viewBox="0 0 7 10">
                                    <path d="M1.5 5.5v-5h4v5M0 5.5h7M4.5 1v5M3.5 6v4" fill="none" stroke="#000" />
                                </svg>
                            </PlainButton>
                            <PlainButton $w={12} aria-label="閉じる"><Glyph name="close" /></PlainButton>
                        </CaptionEnd>
                    </Caption>
                    <EditBody>
                        <RuleList />
                        <Splitter />
                        <ResultList />
                    </EditBody>
                </EditPanel>
                <BottomTabs>
                    {tabs.map(([icon, text, w]) => (
                        <BottomTab key={icon} $w={w} $on={icon === 'drc'}>
                            <svg width="16" height="16" viewBox="0 0 16 16">{tabIcons[icon]}</svg>
                            {text}
                        </BottomTab>
                    ))}
                </BottomTabs>
                <StatusBar>
                    通過点を編集してください.
                    <StatusBox />
                    <svg width="12" height="12" viewBox="0 0 12 12">
                        <path d="M0 12L12 0M4 12l8-8M8 12l4-4" stroke="#808080" strokeWidth="2" />
                    </svg>
                </StatusBar>
                <PassPointDialog />
            </Frame>
        </>
    )
}

export default App
